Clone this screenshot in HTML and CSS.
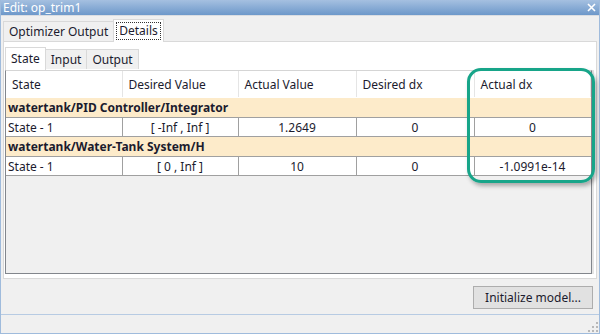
FILE: index.html
```html
<!DOCTYPE html>
<html lang="en">
<head>
  <meta charset="UTF-8">
  <title>Edit: op_trim1</title>
  <link rel="stylesheet" href="styles.css">
</head>
<body>
  <div class="window">
    <div class="titlebar">
      <span class="title">Edit: op_trim1</span>
      <svg class="close" width="9" height="9" viewBox="0 0 9 9">
        <path d="M1 1 L8 8 M8 1 L1 8" stroke="#fff" stroke-width="1.6"/>
      </svg>
    </div>

    <div class="content">
      <div class="tabs outer-tabs">
        <div class="tab">Optimizer Output</div>
        <div class="tab active"><span class="focus">Details</span></div>
      </div>

      <div class="panel">
        <div class="tabs inner-tabs">
          <div class="tab active">State</div>
          <div class="tab">Input</div>
          <div class="tab">Output</div>
        </div>

        <div class="grid">
          <table>
            <colgroup>
              <col style="width:116px">
              <col style="width:116px">
              <col style="width:118px">
              <col style="width:118px">
              <col>
            </colgroup>
            <thead>
              <tr>
                <th>State</th>
                <th>Desired Value</th>
                <th>Actual Value</th>
                <th>Desired dx</th>
                <th>Actual dx</th>
              </tr>
            </thead>
            <tbody>
              <tr class="group"><td colspan="5">watertank/PID Controller/Integrator</td></tr>
              <tr>
                <td class="name">State - 1</td>
                <td>[ -Inf , Inf ]</td>
                <td>1.2649</td>
                <td>0</td>
                <td>0</td>
              </tr>
              <tr class="group"><td colspan="5">watertank/Water-Tank System/H</td></tr>
              <tr>
                <td class="name">State - 1</td>
                <td>[ 0 , Inf ]</td>
                <td>10</td>
                <td>0</td>
                <td>-1.0991e-14</td>
              </tr>
            </tbody>
          </table>
        </div>
      </div>

      <div class="actions">
        <button class="btn">Initialize model...</button>
      </div>
    </div>

    <div class="statusbar">
      <svg class="grip" width="10" height="10" viewBox="0 0 10 10">
        <rect x="8" y="0" width="2" height="2" fill="#b8b8b8"/>
        <rect x="4" y="4" width="2" height="2" fill="#b8b8b8"/>
        <rect x="8" y="4" width="2" height="2" fill="#b8b8b8"/>
        <rect x="0" y="8" width="2" height="2" fill="#b8b8b8"/>
        <rect x="4" y="8" width="2" height="2" fill="#b8b8b8"/>
        <rect x="8" y="8" width="2" height="2" fill="#b8b8b8"/>
      </svg>
    </div>

    <div class="highlight"></div>
  </div>
</body>
</html>
```

FILE: styles.css
```css
body {
  margin: 0;
  width: 600px;
  height: 334px;
  overflow: hidden;
  background: #f0f0f0;
  font-family: "Segoe UI", "Noto Sans", sans-serif;
  font-size: 12px;
  color: #1b1b2e;
}

.window {
  position: relative;
  box-sizing: border-box;
  height: 334px;
  display: flex;
  flex-direction: column;
  border-left: 1px solid #9fbbdc;
  border-right: 1px solid #9fbbdc;
  border-bottom: 1px solid #9fbbdc;
}

.titlebar {
  height: 15px;
  display: flex;
  align-items: center;
  justify-content: space-between;
  padding: 0 3px 0 2px;
  background: linear-gradient(#a5c0e0, #6d98ca);
  border-bottom: 1px solid #dadde2;
  color: #fff;
}

.title {
  line-height: 15px;
  font-size: 12px;
}

.content {
  flex: 1;
  display: flex;
  flex-direction: column;
  padding: 3px 2px 0 2px;
}

.tabs {
  display: flex;
  align-items: flex-end;
}

.tab {
  height: 20px;
  line-height: 19px;
  padding: 0 5px;
  box-sizing: border-box;
  background: #f0f0f0;
  border: 1px solid #d9d9d9;
  border-bottom: none;
  margin-left: -1px;
}

.tab:first-child {
  margin-left: 0;
}

.tab.active {
  height: 23px;
  line-height: 21px;
  background: #fff;
  position: relative;
  z-index: 1;
  margin-bottom: -1px;
}

.outer-tabs .tab.active {
  padding: 0 2px;
}

.focus {
  display: inline-block;
  line-height: 16px;
  padding: 0 2px;
  border: 1px dotted #333;
}

.panel {
  height: 238px;
  box-sizing: border-box;
  background: #fff;
  border: 1px solid #d9d9d9;
  padding: 5px 4px 4px 1px;
  display: flex;
  flex-direction: column;
}

.inner-tabs .tab.active {
  height: 23px;
  line-height: 22px;
}

.grid {
  flex: 1;
  background: #f0f0f0;
  border: 1px solid #82868c;
  border-top-color: #d5d5d5;
  margin-top: 1px;
  box-shadow: 2px 0 0 #e4e4e4;
}

table {
  width: 100%;
  border-collapse: collapse;
  table-layout: fixed;
}

th {
  height: 26px;
  padding: 0 6px;
  text-align: left;
  font-weight: normal;
  background: #fff;
  border-right: 1px solid #e5e5e5;
  border-bottom: 1px solid #fff;
}

td {
  height: 18px;
  padding: 0 4px;
  text-align: center;
  background: #fff;
  border: 1px solid #a0a0a0;
  white-space: nowrap;
}

td:first-child {
  border-left: none;
}

td:last-child {
  border-right: none;
}

td.name {
  text-align: left;
  padding-left: 2px;
}

.group td {
  height: 19px;
  text-align: left;
  font-weight: bold;
  padding-left: 2px;
  background: #fdebca;
  border-top: none;
  border-left: none;
  border-right: none;
}

.actions {
  display: flex;
  justify-content: flex-end;
  padding: 7px 4px 0 0;
  height: 30px;
  box-sizing: border-box;
}

.btn {
  width: 120px;
  height: 23px;
  font-family: inherit;
  font-size: 12px;
  color: #1b1b2e;
  background: #e1e1e1;
  border: 1px solid #adadad;
  padding: 0;
}

.statusbar {
  height: 17px;
  border-top: 1px solid #b7cbe3;
  display: flex;
  justify-content: flex-end;
  align-items: flex-end;
  padding: 0 1px 1px 0;
}

.highlight {
  position: absolute;
  left: 466px;
  top: 68px;
  width: 122px;
  height: 109px;
  border: 3px solid #17a589;
  border-radius: 14px;
  box-shadow: 2px 3px 4px rgba(0, 0, 0, 0.3);
  pointer-events: none;
}
```
